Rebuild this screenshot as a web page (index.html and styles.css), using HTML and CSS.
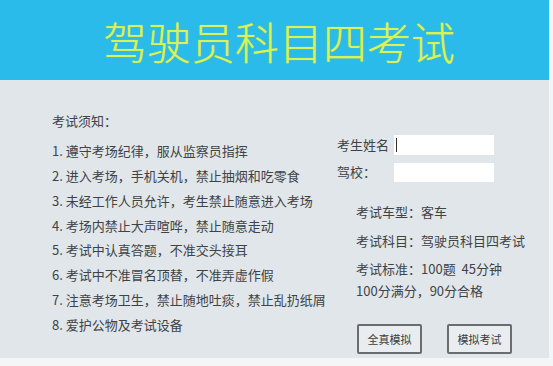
FILE: index.html
```html
<!DOCTYPE html>
<html lang="zh-CN">
<head>
<meta charset="utf-8">
<title>驾驶员科目四考试</title>
<link rel="stylesheet" href="styles.css">
</head>
<body>
<div class="frame">
  <header class="header">
    <h1 class="title">驾驶员科目四考试</h1>
  </header>
  <main class="main">
    <section class="rules">
      <div class="rules-head">考试须知：</div>
      <ol class="rule-list">
        <li>1. 遵守考场纪律，服从监察员指挥</li>
        <li>2. 进入考场，手机关机，禁止抽烟和吃零食</li>
        <li>3. 未经工作人员允许，考生禁止随意进入考场</li>
        <li>4. 考场内禁止大声喧哗，禁止随意走动</li>
        <li>5. 考试中认真答题，不准交头接耳</li>
        <li>6. 考试中不准冒名顶替，不准弄虚作假</li>
        <li>7. 注意考场卫生，禁止随地吐痰，禁止乱扔纸屑</li>
        <li>8. 爱护公物及考试设备</li>
      </ol>
    </section>
    <section class="side">
      <div class="form">
        <div class="row">
          <span class="label">考生姓名</span>
          <span class="field field-a"><span class="caret"></span></span>
        </div>
        <div class="row">
          <span class="label">驾校：</span>
          <span class="field field-b"></span>
        </div>
      </div>
      <div class="info">
        <div class="info-line">考试车型：客车</div>
        <div class="info-line">考试科目：驾驶员科目四考试</div>
        <div class="info-group">
          <div class="info-line">考试标准：100题&nbsp; 45分钟</div>
          <div class="info-line">100分满分，90分合格</div>
        </div>
      </div>
      <div class="buttons">
        <button class="btn">全真模拟</button>
        <button class="btn">模拟考试</button>
      </div>
    </section>
  </main>
</div>
</body>
</html>
```

FILE: styles.css
```css
* { box-sizing: border-box; }

html, body {
  margin: 0;
  padding: 0;
}

body {
  width: 553px;
  height: 366px;
  background: #f3f5f6;
  font-family: "Noto Sans CJK SC", "Noto Sans", sans-serif;
  color: #404346;
  overflow: hidden;
}

.frame {
  width: 549px;
}

.header {
  height: 80px;
  background: #2bbbea;
}

.title {
  margin: 0;
  padding-left: 103px;
  font-size: 44px;
  line-height: 82px;
  font-weight: 300;
  color: #d8f25c;
  letter-spacing: 0;
  text-shadow: 0 0 1px #b9d93e;
}

.main {
  height: 278px;
  background: #e1e6ea;
  display: flex;
}

.rules {
  width: 337px;
  padding-left: 52px;
  padding-top: 28px;
  font-size: 13px;
  line-height: 25px;
}

.rules-head {
  margin-bottom: 5px;
}

.rule-list {
  margin: 0;
  padding: 0;
  list-style: none;
}

.rule-list li {
  height: 24.85px;
  white-space: nowrap;
}

.side {
  flex: 1;
  padding-top: 55px;
  font-size: 13px;
}

.form {
  display: flex;
  flex-direction: column;
  gap: 7px;
}

.row {
  display: flex;
  align-items: center;
}

.label {
  width: 57px;
  line-height: 20px;
  white-space: nowrap;
}

.field {
  width: 100px;
  background: #ffffff;
  display: flex;
  align-items: center;
  padding-left: 2px;
}

.field-a { height: 20px; }
.field-b { height: 19px; }

.caret {
  width: 1px;
  height: 14px;
  background: #333;
}

.info {
  margin-top: 19px;
  padding-left: 19px;
  display: flex;
  flex-direction: column;
  gap: 7px;
}

.info-line {
  line-height: 22px;
  white-space: nowrap;
}

.info-group {
  margin-top: -1px;
}

.buttons {
  margin-top: 22px;
  padding-left: 20px;
  display: flex;
  gap: 25px;
}

.btn {
  width: 65px;
  height: 30px;
  padding: 0;
  background: #e9edf0;
  border: 2px solid #6a6d70;
  border-radius: 2px;
  font-family: "Noto Sans CJK SC", sans-serif;
  font-size: 11px;
  color: #3a3d40;
}
```
